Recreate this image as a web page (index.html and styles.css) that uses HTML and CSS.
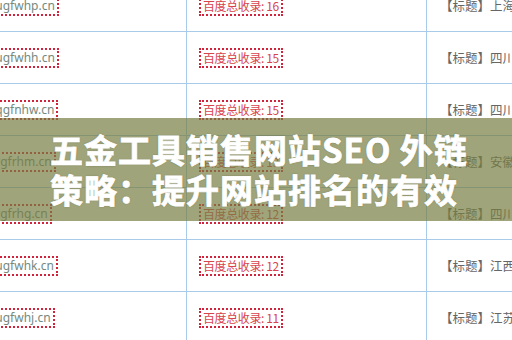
FILE: index.html
```html
<!DOCTYPE html>
<html lang="zh-CN">
<head>
<meta charset="utf-8">
<title>五金工具销售网站SEO 外链策略</title>
<link rel="stylesheet" href="styles.css">
</head>
<body>
<div class="page">
  <div class="table">
    <div class="row">
      <div class="cell c1"><span class="domain">www.ougfwhp.cn</span></div>
      <div class="cell c2"><span class="count">百度总收录: 16</span></div>
      <div class="cell c3"><span class="title">【标题】上海五金工具网站</span></div>
    </div>
    <div class="row">
      <div class="cell c1"><span class="domain">www.ougfwhh.cn</span></div>
      <div class="cell c2"><span class="count">百度总收录: 15</span></div>
      <div class="cell c3"><span class="title">【标题】四川五金工具网站</span></div>
    </div>
    <div class="row">
      <div class="cell c1"><span class="domain">www.oqgfnhw.cn</span></div>
      <div class="cell c2"><span class="count">百度总收录: 15</span></div>
      <div class="cell c3"><span class="title">【标题】四川五金工具网站</span></div>
    </div>
    <div class="row">
      <div class="cell c1"><span class="domain">www.orgfrhm.cn</span></div>
      <div class="cell c2"><span class="count">百度总收录: 13</span></div>
      <div class="cell c3"><span class="title">【标题】安徽五金工具网站</span></div>
    </div>
    <div class="row">
      <div class="cell c1"><span class="domain">www.orgfrhg.cn</span></div>
      <div class="cell c2"><span class="count">百度总收录: 12</span></div>
      <div class="cell c3"><span class="title">【标题】四川五金工具网站</span></div>
    </div>
    <div class="row">
      <div class="cell c1"><span class="domain">www.ougfwhk.cn</span></div>
      <div class="cell c2"><span class="count">百度总收录: 12</span></div>
      <div class="cell c3"><span class="title">【标题】江西五金工具网站</span></div>
    </div>
    <div class="row">
      <div class="cell c1"><span class="domain">www.ougfwhj.cn</span></div>
      <div class="cell c2"><span class="count">百度总收录: 11</span></div>
      <div class="cell c3"><span class="title">【标题】江苏五金工具网站</span></div>
    </div>
  </div>
  <div class="banner">
    <h1 class="headline">五金工具销售网站SEO 外链<br>策略：提升网站排名的有效</h1>
  </div>
</div>
</body>
</html>
```
FILE: styles.css
```css
html, body {
  margin: 0;
  padding: 0;
  background: #ffffff;
}
body {
  width: 512px;
  height: 340px;
  overflow: hidden;
  font-family: "Noto Sans", "Noto Sans CJK SC", sans-serif;
}
.page {
  position: relative;
  width: 512px;
  height: 340px;
  overflow: hidden;
}
.table {
  margin-top: -20px;
}
.row {
  display: grid;
  grid-template-columns: 186px 240px 200px;
  height: 52px;
  box-sizing: border-box;
  border-bottom: 1px solid #a9cbea;
}
.cell {
  display: flex;
  align-items: center;
  white-space: nowrap;
  overflow: hidden;
}
.c2, .c3 {
  border-left: 1px solid #a9cbea;
}
.c2 {
  padding-left: 12px;
}
.c3 {
  padding-left: 13px;
}
.domain {
  margin-left: -47px;
  padding: 0 2px;
  border: 2px dotted #d2233c;
  font-size: 12px;
  line-height: 16px;
  color: #74897f;
}
.count {
  padding: 0 2px;
  border: 2px dotted #d2233c;
  font-family: "Noto Sans CJK SC", sans-serif;
  font-size: 12px;
  line-height: 16px;
  color: #d8444c;
  letter-spacing: -0.4px;
}
.title {
  font-family: "Noto Sans CJK SC", sans-serif;
  font-size: 12.5px;
  color: #666666;
}
.banner {
  position: absolute;
  left: 0;
  top: 118px;
  width: 512px;
  height: 103px;
  box-sizing: border-box;
  padding: 11px 0 0 50px;
  background: rgba(118, 126, 66, 0.70);
}
.headline {
  margin: 0;
  font-family: "Noto Sans CJK SC", sans-serif;
  font-weight: 700;
  font-size: 33px;
  line-height: 40px;
  letter-spacing: 1px;
  color: #ffffff;
  -webkit-text-stroke: 0.8px #ffffff;
  text-shadow: 0 0 2px rgba(50, 50, 30, 0.4);
}
```
